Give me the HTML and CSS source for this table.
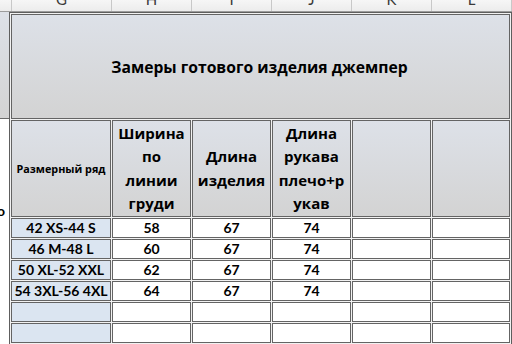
FILE: index.html
```html
<!DOCTYPE html>
<html>
<head>
<meta charset="utf-8">
<link rel="stylesheet" href="styles.css">
</head>
<body>
<div class="colhdr">
  <div class="ch stub"></div>
  <div class="ch c1"><span>G</span></div>
  <div class="ch c2"><span>H</span></div>
  <div class="ch c2"><span>I</span></div>
  <div class="ch c2"><span>J</span></div>
  <div class="ch c2"><span>K</span></div>
  <div class="ch c3"><span>L</span></div>
</div>
<div class="sheet">
  <div class="left">
    <div class="left-top"></div>
    <div class="left-mid"><span class="clip">о</span></div>
  </div>
  <div class="grid">
    <div class="cell title">Замеры готового изделия джемпер</div>

    <div class="cell hd small">Размерный ряд</div>
    <div class="cell hd">Ширина<br>по<br>линии<br>груди</div>
    <div class="cell hd">Длина<br>изделия</div>
    <div class="cell hd">Длина<br>рукава<br>плечо+р<br>укав</div>
    <div class="cell hd"></div>
    <div class="cell hd"></div>

    <div class="cell size">42 XS-44 S</div>
    <div class="cell">58</div>
    <div class="cell">67</div>
    <div class="cell">74</div>
    <div class="cell"></div>
    <div class="cell"></div>

    <div class="cell size">46 M-48 L</div>
    <div class="cell">60</div>
    <div class="cell">67</div>
    <div class="cell">74</div>
    <div class="cell"></div>
    <div class="cell"></div>

    <div class="cell size">50 XL-52 XXL</div>
    <div class="cell">62</div>
    <div class="cell">67</div>
    <div class="cell">74</div>
    <div class="cell"></div>
    <div class="cell"></div>

    <div class="cell size">54 3XL-56 4XL</div>
    <div class="cell">64</div>
    <div class="cell">67</div>
    <div class="cell">74</div>
    <div class="cell"></div>
    <div class="cell"></div>

    <div class="cell size"></div>
    <div class="cell"></div>
    <div class="cell"></div>
    <div class="cell"></div>
    <div class="cell"></div>
    <div class="cell"></div>

    <div class="cell size"></div>
    <div class="cell"></div>
    <div class="cell"></div>
    <div class="cell"></div>
    <div class="cell"></div>
    <div class="cell"></div>
  </div>
</div>
</body>
</html>
```

FILE: styles.css
```css
* { box-sizing: border-box; }
html, body { margin: 0; padding: 0; background: #ffffff; }
body {
  width: 512px;
  height: 344px;
  overflow: hidden;
  font-family: Lato, "Open Sans", sans-serif;
  color: #000;
}
.colhdr {
  display: flex;
  height: 12px;
  background: linear-gradient(#f6f6f6, #ececec);
  border-bottom: 1px solid #9c9c9c;
  overflow: hidden;
}
.ch {
  flex: none;
  height: 11px;
  border-right: 1px solid #c8c8c8;
  text-align: center;
  overflow: hidden;
  font-size: 15px;
  color: #3a3a3a;
}
.ch span { display: block; margin-top: -9px; line-height: 16px; }
.stub { width: 12px; }
.c1 { width: 100px; }
.c2 { width: 80px; }
.c3 { width: 80px; }
.sheet { display: flex; }
.left { width: 9px; flex: none; display: flex; flex-direction: column; }
.left-top {
  height: 107px;
  background: linear-gradient(#dde1e8, #d3d3d3);
  border-bottom: 1px solid #6a6a6a;
}
.left-mid {
  height: 98px;
  position: relative;
  overflow: hidden;
}
.clip {
  position: absolute;
  left: -3px;
  top: 84px;
  font-size: 14px;
  font-weight: 700;
  line-height: 16px;
}
.grid {
  flex: none;
  display: grid;
  grid-template-columns: 100px 79px 79px 79px 79px 78px;
  grid-template-rows: 105px 97px repeat(6, 20px);
  gap: 1px;
  padding: 1px;
  border: 1px solid #5e5e5e;
  background: #f2f2f2;
}
.cell {
  border: 1px solid #646464;
  background: #ffffff;
  display: flex;
  align-items: center;
  justify-content: center;
  text-align: center;
  font-weight: 700;
  font-size: 14px;
  line-height: 16px;
  white-space: nowrap;
  overflow: hidden;
}
.title {
  grid-column: 1 / 7;
  background: linear-gradient(#dde1e8, #d3d3d3);
  font-family: "Open Sans", Lato, sans-serif;
  font-size: 15.7px;
  padding-right: 2px;
}
.hd {
  background: linear-gradient(#dde1e8, #d3d3d3);
  font-family: "Open Sans", Lato, sans-serif;
  font-size: 15px;
  line-height: 23.3px;
}
.small { font-size: 10.8px; line-height: 12px; }
.size { background: #dbe5f1; }
```
